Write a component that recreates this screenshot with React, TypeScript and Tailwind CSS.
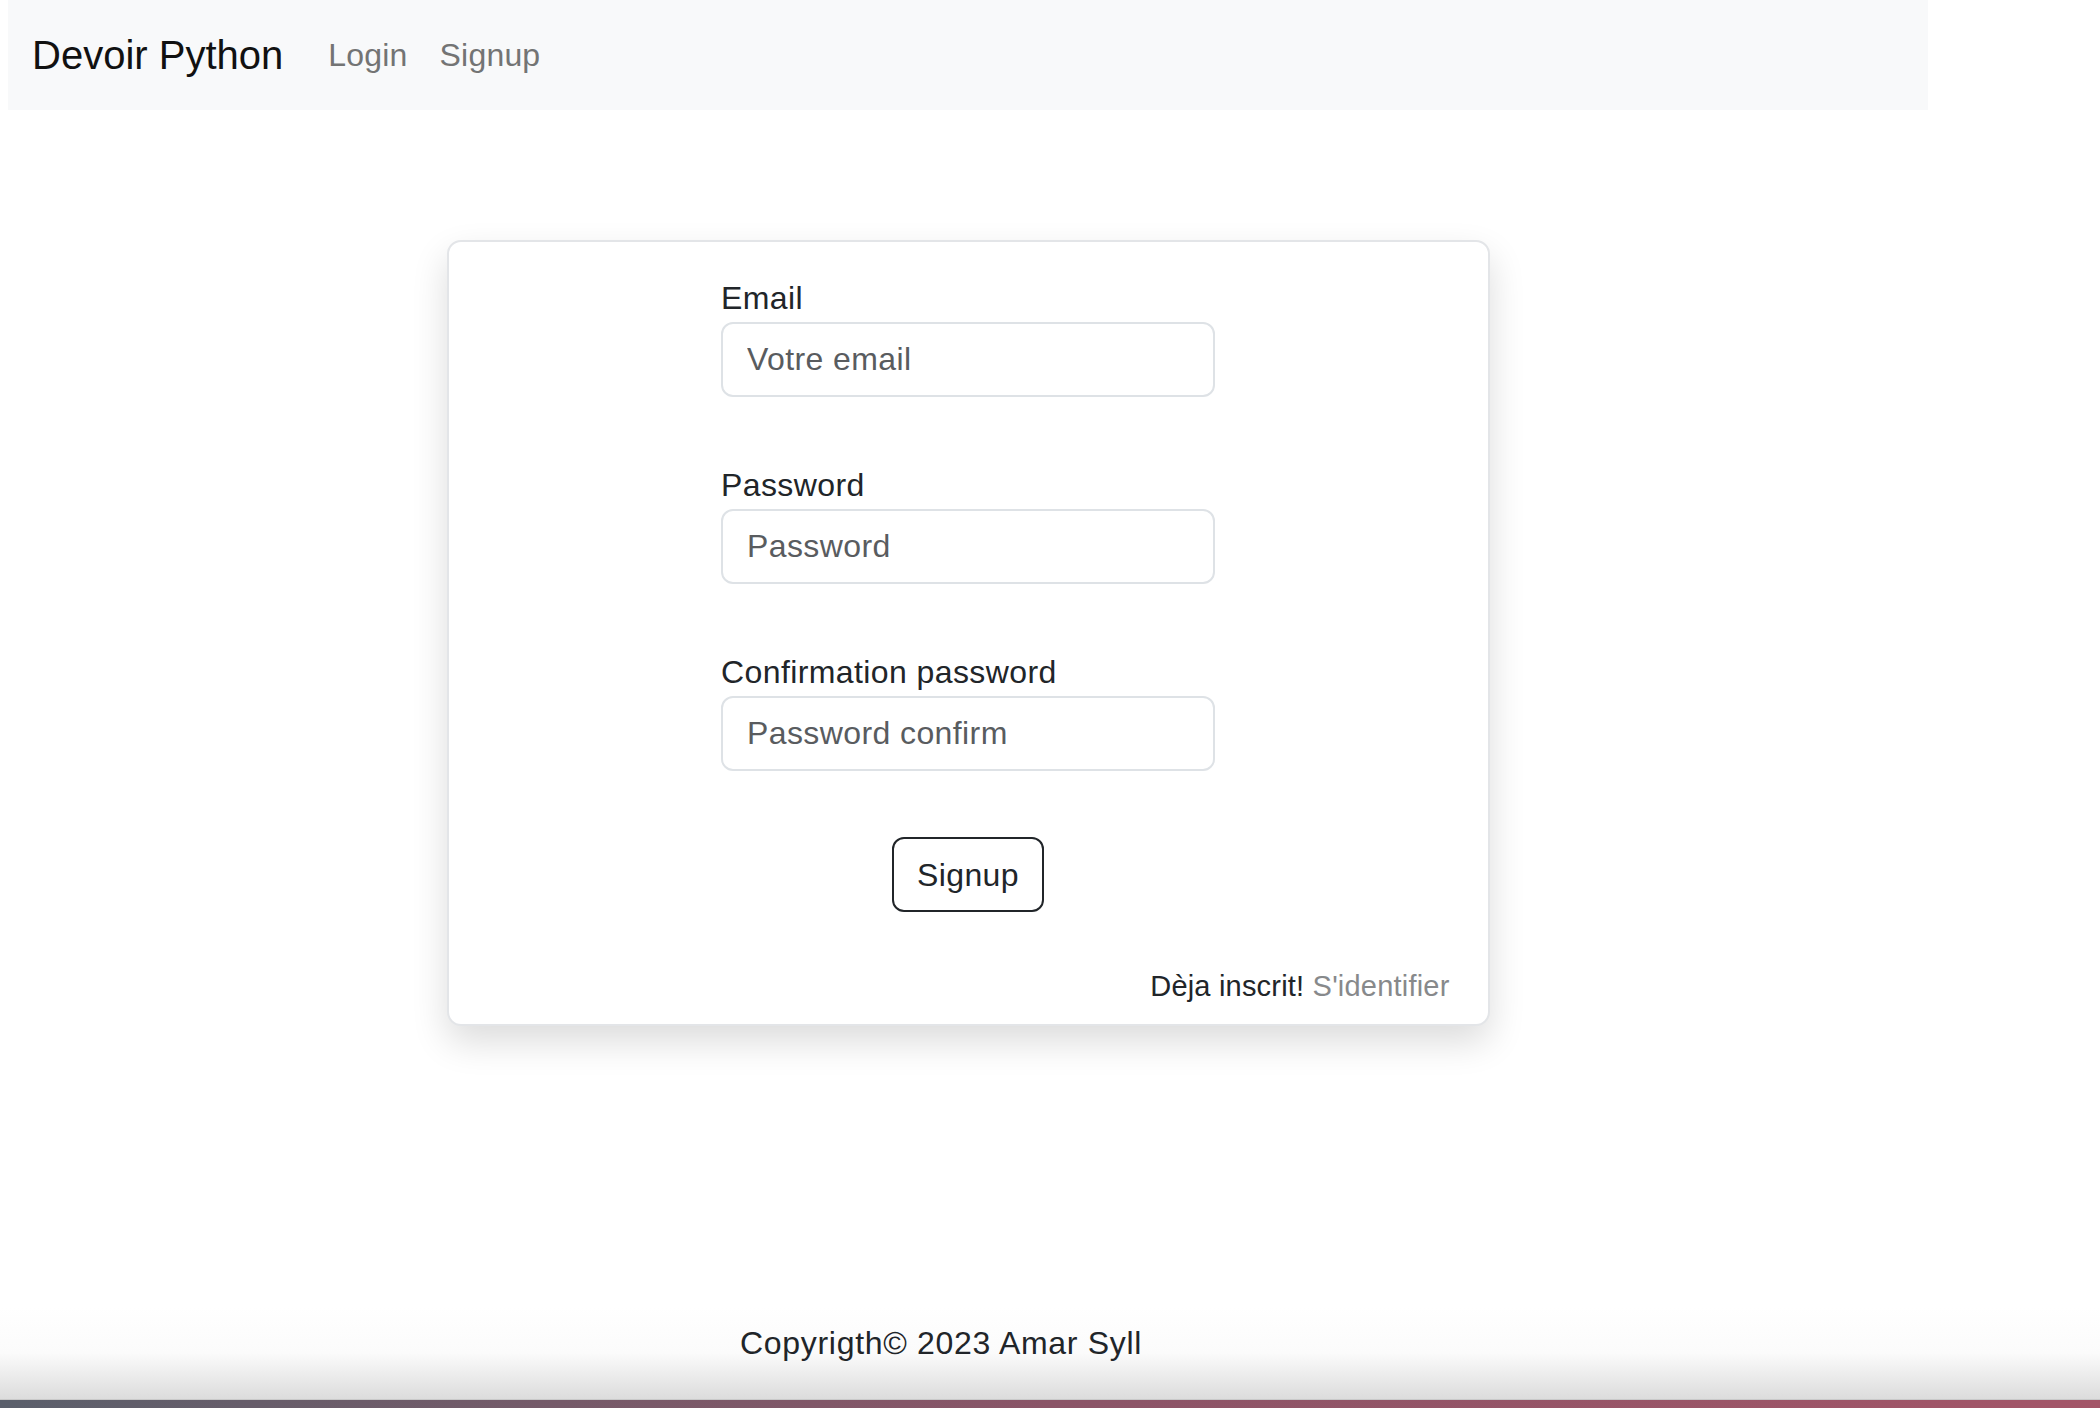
import type { ReactNode } from "react";

type FieldProps = {
  id: string;
  label: string;
  type: string;
  placeholder: string;
  className?: string;
};

function Field({ id, label, type, placeholder, className }: FieldProps) {
  return (
    <div className={`flex flex-col ${className ?? ""}`}>
      <label htmlFor={id} className="text-[32px] leading-[48px] tracking-[0.4px] text-[#212529]">
        {label}
      </label>
      <input
        id={id}
        type={type}
        placeholder={placeholder}
        className="h-[75px] w-full rounded-[12px] border-2 border-[#dee2e6] bg-white px-[24px] text-[32px] tracking-[0.4px] text-[#212529] outline-none placeholder:text-[#595c5f]"
      />
    </div>
  );
}

function NavLink({ children }: { children: ReactNode }) {
  return (
    <a href="#" className="px-4 text-[32px] leading-[48px] tracking-[0.2px] text-[#737474]">
      {children}
    </a>
  );
}

export default function App() {
  return (
    <div
      className="flex min-h-screen flex-col bg-white"
      style={{ fontFamily: "'Liberation Sans', Arial, sans-serif" }}
    >
      <div className="w-[1928px] pl-2">
        <nav className="flex h-[110px] items-center bg-[#f8f9fa] px-6">
          <a href="#" className="mr-[29px] text-[40px] leading-[60px] text-[#111]">
            Devoir Python
          </a>
          <NavLink>Login</NavLink>
          <NavLink>Signup</NavLink>
        </nav>

        <main className="flex justify-center pt-[130px]">
          <form className="w-[1043px] rounded-[14px] border-2 border-[#e3e5e8] bg-white pt-[32px] pb-[14px] pr-[38px] shadow-[0_16px_36px_rgba(0,0,0,0.14)]">
            <div className="mx-auto w-[494px] translate-x-[19px]">
              <Field id="email" label="Email" type="email" placeholder="Votre email" className="mb-16" />
              <Field id="password" label="Password" type="password" placeholder="Password" className="mb-16" />
              <Field
                id="password2"
                label="Confirmation password"
                type="password"
                placeholder="Password confirm"
              />
              <div className="mt-[66px] flex justify-center">
                <button
                  type="button"
                  className="h-[75px] w-[152px] rounded-[12px] border-2 border-[#212529] bg-white text-[32px] tracking-[0.4px] text-[#212529]"
                >
                  Signup
                </button>
              </div>
            </div>
            <p className="mt-[50px] text-right text-[29px] leading-[48px] tracking-[0.2px] text-[#212529]">
              Dèja inscrit! <a href="#" className="text-[#87898b]">S'identifier</a>
            </p>
          </form>
        </main>
      </div>

      <div className="flex-1" />

      <footer className="flex flex-col">
        <div className="h-[92px] bg-gradient-to-b from-white via-[#fbfbfb] to-[#dcdcdc] pl-[740px] pt-[12px]">
          <p className="text-[32px] leading-[48px] tracking-[0.7px] text-[#212529]">Copyrigth© 2023 Amar Syll</p>
        </div>
        <div className="h-px bg-[#c9c9c9]" />
        <div className="h-[8px] bg-gradient-to-r from-[#5a5f6b] via-[#8a5467] to-[#a35568]" />
      </footer>
    </div>
  );
}
